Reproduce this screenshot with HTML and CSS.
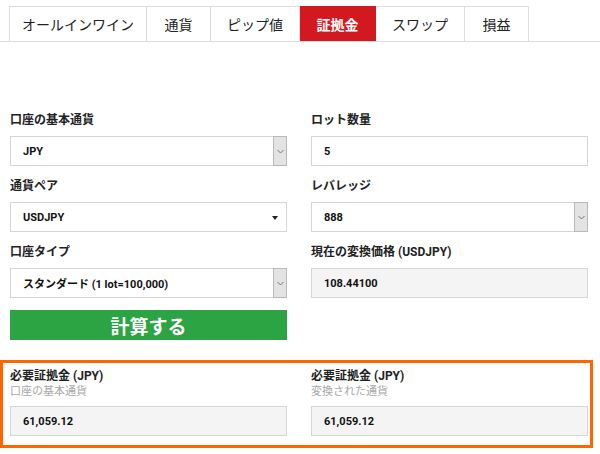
FILE: index.html
```html
<!DOCTYPE html>
<html lang="ja">
<head>
<meta charset="utf-8">
<link rel="stylesheet" href="styles.css">
</head>
<body>
<div class="tabbar">
  <div class="tab t1">オールインワイン</div>
  <div class="tab t2">通貨</div>
  <div class="tab t3">ピップ値</div>
  <div class="tab t4 active">証拠金</div>
  <div class="tab t5">スワップ</div>
  <div class="tab t6">損益</div>
</div>

<div class="form">
  <div class="field">
    <div class="label">口座の基本通貨</div>
    <div class="input select"><span>JPY</span><span class="arrowbox"><svg width="7" height="5" viewBox="0 0 7 5"><path d="M0.5 1 L3.5 4 L6.5 1" fill="none" stroke="#777" stroke-width="1"/></svg></span></div>
  </div>
  <div class="field">
    <div class="label">ロット数量</div>
    <div class="input"><span>5</span></div>
  </div>
  <div class="field">
    <div class="label">通貨ペア</div>
    <div class="input select"><span>USDJPY</span><span class="tri"></span></div>
  </div>
  <div class="field">
    <div class="label">レバレッジ</div>
    <div class="input select"><span>888</span><span class="arrowbox"><svg width="7" height="5" viewBox="0 0 7 5"><path d="M0.5 1 L3.5 4 L6.5 1" fill="none" stroke="#777" stroke-width="1"/></svg></span></div>
  </div>
  <div class="field">
    <div class="label">口座タイプ</div>
    <div class="input select"><span>スタンダード (1 lot=100,000)</span><span class="arrowbox"><svg width="7" height="5" viewBox="0 0 7 5"><path d="M0.5 1 L3.5 4 L6.5 1" fill="none" stroke="#777" stroke-width="1"/></svg></span></div>
  </div>
  <div class="field">
    <div class="label">現在の変換価格 (USDJPY)</div>
    <div class="input readonly"><span>108.44100</span></div>
  </div>
  <div class="field">
    <div class="button">計算する</div>
  </div>
</div>

<div class="result">
  <div class="field">
    <div class="label">必要証拠金 (JPY)</div>
    <div class="sublabel">口座の基本通貨</div>
    <div class="input readonly"><span>61,059.12</span></div>
  </div>
  <div class="field">
    <div class="label">必要証拠金 (JPY)</div>
    <div class="sublabel">変換された通貨</div>
    <div class="input readonly"><span>61,059.12</span></div>
  </div>
</div>
</body>
</html>
```

FILE: styles.css
```css
* { box-sizing: border-box; }
html, body { margin: 0; padding: 0; background: #fff; }
body {
  width: 600px;
  height: 454px;
  overflow: hidden;
  font-family: Roboto, "Noto Sans CJK JP", sans-serif;
  color: #222;
}
.tabbar {
  display: flex;
  margin-top: 6px;
  padding-left: 9px;
  border-bottom: 1px solid #ddd;
  height: 36px;
}
.tab {
  height: 35px;
  border: 1px solid #ddd;
  border-bottom: none;
  border-left: none;
  display: flex;
  align-items: center;
  justify-content: center;
  font-size: 14px;
  color: #222;
  background: #fff;
}
.tab.t1 { border-left: 1px solid #ddd; width: 138px; }
.t2 { width: 64px; }
.t3 { width: 89px; }
.t4 { width: 76px; }
.t5 { width: 89px; }
.t6 { width: 64px; }
.tab.active {
  background: #d31920;
  border-color: #d31920;
  color: #fff;
  font-weight: bold;
}
.form {
  display: grid;
  grid-template-columns: 277px 277px;
  column-gap: 24px;
  row-gap: 12px;
  padding: 70px 0 0 10px;
}
.label {
  font-size: 12px;
  font-weight: bold;
  line-height: 16px;
  height: 16px;
  margin-bottom: 8px;
  color: #222;
}
.input {
  height: 30px;
  border: 1px solid #d6d6d6;
  display: flex;
  align-items: center;
  padding-left: 12px;
  font-size: 11px;
  font-weight: bold;
  color: #111;
  background: #fff;
  position: relative;
}
.input.readonly { background: #f4f4f4; }
.arrowbox {
  position: absolute;
  right: -1px;
  top: -1px;
  bottom: -1px;
  width: 14px;
  background: #e3e3e3;
  border: 1px solid #b9b9b9;
  display: flex;
  align-items: center;
  justify-content: center;
}
.tri {
  position: absolute;
  right: 8px;
  top: 13px;
  width: 0;
  height: 0;
  border-left: 3.5px solid transparent;
  border-right: 3.5px solid transparent;
  border-top: 4px solid #222;
}
.button {
  height: 30px;
  background: #2ca443;
  color: #fff;
  font-weight: bold;
  font-size: 19px;
  display: flex;
  align-items: center;
  justify-content: center;
}
.result {
  margin-top: 20px;
  width: 593px;
  height: 88px;
  border: 3px solid #ff6600;
  display: grid;
  grid-template-columns: 277px 277px;
  column-gap: 24px;
  padding: 4px 0 0 7px;
}
.result .label { margin-bottom: 0; height: 18px; line-height: 18px; }
.sublabel {
  font-size: 11px;
  color: #a8a8a8;
  line-height: 14px;
  height: 14px;
  margin-bottom: 7px;
}
```
